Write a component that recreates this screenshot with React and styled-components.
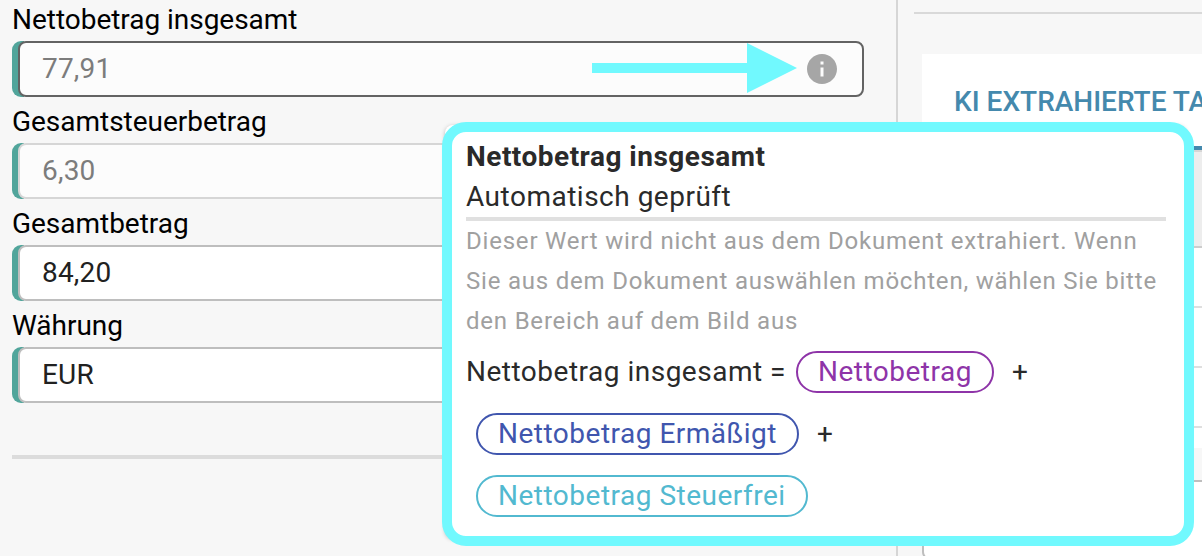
import React from "react";
import styled, { createGlobalStyle } from "styled-components";

const GlobalStyle = createGlobalStyle`
  * { box-sizing: border-box; }
  html, body { margin: 0; overflow: hidden; }
  body { font-family: Roboto, "Liberation Sans", sans-serif; font-size: 28px; }
`;

const Page = styled.div`
  position: relative;
  display: flex;
  width: 1202px;
  height: 556px;
  overflow: hidden;
  background: #f7f7f7;
`;

const FormPanel = styled.div`
  flex: none;
  width: 898px;
  padding: 0 32px 0 12px;
  border-right: 2px solid #d6d6d6;
`;

const Field = styled.div`
  height: 102px;
`;

const Label = styled.label`
  display: block;
  height: 41px;
  padding-top: 3px;
  line-height: 34px;
  letter-spacing: -0.03px;
  color: #000;
  white-space: nowrap;
`;

const InputFrame = styled.div`
  height: 56px;
  padding-left: 6px;
  border-radius: 9px;
  background: linear-gradient(to right, #51a59b 12px, transparent 12px);
`;

const InputBox = styled.div`
  display: flex;
  align-items: center;
  justify-content: space-between;
  height: 56px;
  padding: 0 22px;
  border: 2px solid ${(p) => (p.$focused ? "#636363" : p.$readOnly ? "#d6d6d6" : "#bebebe")};
  border-radius: 8px;
  background: ${(p) => (p.$readOnly ? "#fcfcfc" : "#fff")};
  color: ${(p) => (p.$readOnly ? "#7c7c7c" : "#212121")};
`;

const InputValue = styled.span`
  padding-bottom: 2px;
  letter-spacing: 0.2px;
`;

const InfoIcon = styled.svg`
  width: 36px;
  height: 36px;
  fill: #a6a6a6;
`;

const Divider = styled.div`
  height: 4px;
  margin-top: 47px;
  background: #dcdcdc;
`;

const TablePanel = styled.div`
  flex: none;
  width: 304px;
  padding-left: 16px;
`;

const TopRule = styled.div`
  height: 14px;
  border-bottom: 2px solid #d9d9d9;
`;

const TableCard = styled.div`
  height: 394px;
  margin: 40px 0 0 8px;
  background: #fff;
`;

const Tab = styled.div`
  height: 96px;
  padding: 30px 0 0 32px;
  border-bottom: 4px solid #4489ad;
  line-height: 36px;
  font-weight: 500;
  color: #4489ad;
  white-space: nowrap;
`;

const TableHead = styled.div`
  height: 98px;
  border-top: 2px solid #d6d6d6;
  border-bottom: 2px solid #cdcdcd;
  background: #ededed;
`;

const TableRow = styled.div`
  height: 60px;
  border-bottom: 2px solid #dfdfdf;
`;

const SummaryBox = styled.div`
  height: 80px;
  margin: 32px -10px 0 8px;
  border: 2px solid #bebebe;
  border-radius: 8px;
  background: #fff;
`;

const Arrow = styled.svg`
  position: absolute;
  left: 592px;
  top: 43px;
  width: 205px;
  height: 50px;
  fill: #71f9fe;
`;

const TooltipSurface = styled.div`
  position: absolute;
  left: 445px;
  top: 125px;
  width: 741px;
  height: 413px;
  border-radius: 8px;
  background: #fff;
  box-shadow: 0 1px 4px rgba(0, 0, 0, 0.25);
`;

const Tooltip = styled.div`
  position: absolute;
  left: 442px;
  top: 122px;
  width: 752px;
  height: 424px;
  padding: 5px 18px 0 14px;
  border: 10px solid #71f9fe;
  border-radius: 24px;
  background: #fff;
  color: #2a2a2a;
  letter-spacing: 0.5px;
`;

const TooltipTitle = styled.div`
  line-height: 40px;
  font-weight: 700;
`;

const TooltipStatus = styled.div`
  height: 44px;
  border-bottom: 4px solid #e0e0e0;
  line-height: 40px;
`;

const TooltipText = styled.p`
  margin: 0;
  font-size: 24px;
  line-height: 40px;
  letter-spacing: 0.79px;
  color: #a0a0a0;
  white-space: nowrap;
`;

const Formula = styled.div`
  display: flex;
  flex-direction: column;
  gap: 20px;
  margin-top: 10px;
`;

const FormulaLine = styled.div`
  display: flex;
  align-items: center;
  height: 42px;
  white-space: nowrap;
`;

const FormulaText = styled.span`
  padding-bottom: 2px;
`;

const Chip = styled.span`
  width: ${(p) => p.$width}px;
  height: 42px;
  margin: 0 18px 0 10px;
  padding-left: 20px;
  border: 2px solid ${(p) => p.$color};
  border-radius: 21px;
  line-height: 38px;
  color: ${(p) => p.$color};
`;

const fields = [
  { label: "Nettobetrag insgesamt", value: "77,91", readOnly: true, focused: true },
  { label: "Gesamtsteuerbetrag", value: "6,30", readOnly: true },
  { label: "Gesamtbetrag", value: "84,20" },
  { label: "Währung", value: "EUR" },
];

export default function App() {
  return (
    <Page>
      <GlobalStyle />
      <FormPanel>
        {fields.map((f) => (
          <Field key={f.label}>
            <Label>{f.label}</Label>
            <InputFrame>
              <InputBox $readOnly={f.readOnly} $focused={f.focused}>
                <InputValue>{f.value}</InputValue>
                {f.focused && (
                  <InfoIcon viewBox="0 0 24 24">
                    <path d="M12 2C6.48 2 2 6.48 2 12s4.480 10 10 10 10-4.480 10-10S17.520 2 12 2zm1 15h-2v-6h2v6zm0-8h-2V7h2v2z" />
                  </InfoIcon>
                )}
              </InputBox>
            </InputFrame>
          </Field>
        ))}
        <Divider />
      </FormPanel>
      <TablePanel>
        <TopRule />
        <TableCard>
          <Tab>KI EXTRAHIERTE TABELLE</Tab>
          <TableHead />
          <TableRow />
          <TableRow />
          <TableRow />
        </TableCard>
        <SummaryBox />
      </TablePanel>
      <Arrow viewBox="0 0 205 50">
        <path d="M0 20H155V0L205 25L155 50V30H0Z" />
      </Arrow>
      <TooltipSurface />
      <Tooltip>
        <TooltipTitle>Nettobetrag insgesamt</TooltipTitle>
        <TooltipStatus>Automatisch geprüft</TooltipStatus>
        <TooltipText>
          Dieser Wert wird nicht aus dem Dokument extrahiert. Wenn
          <br />
          Sie aus dem Dokument auswählen möchten, wählen Sie bitte
          <br />
          den Bereich auf dem Bild aus
        </TooltipText>
        <Formula>
          <FormulaLine>
            <FormulaText>Nettobetrag insgesamt =</FormulaText>
            <Chip $color="#8e34a8" $width={198}>Nettobetrag</Chip>
            <FormulaText>+</FormulaText>
          </FormulaLine>
          <FormulaLine>
            <Chip $color="#4056ae" $width={323}>Nettobetrag Ermäßigt</Chip>
            <FormulaText>+</FormulaText>
          </FormulaLine>
          <FormulaLine>
            <Chip $color="#52b9d0" $width={332}>Nettobetrag Steuerfrei</Chip>
          </FormulaLine>
        </Formula>
      </Tooltip>
    </Page>
  );
}
